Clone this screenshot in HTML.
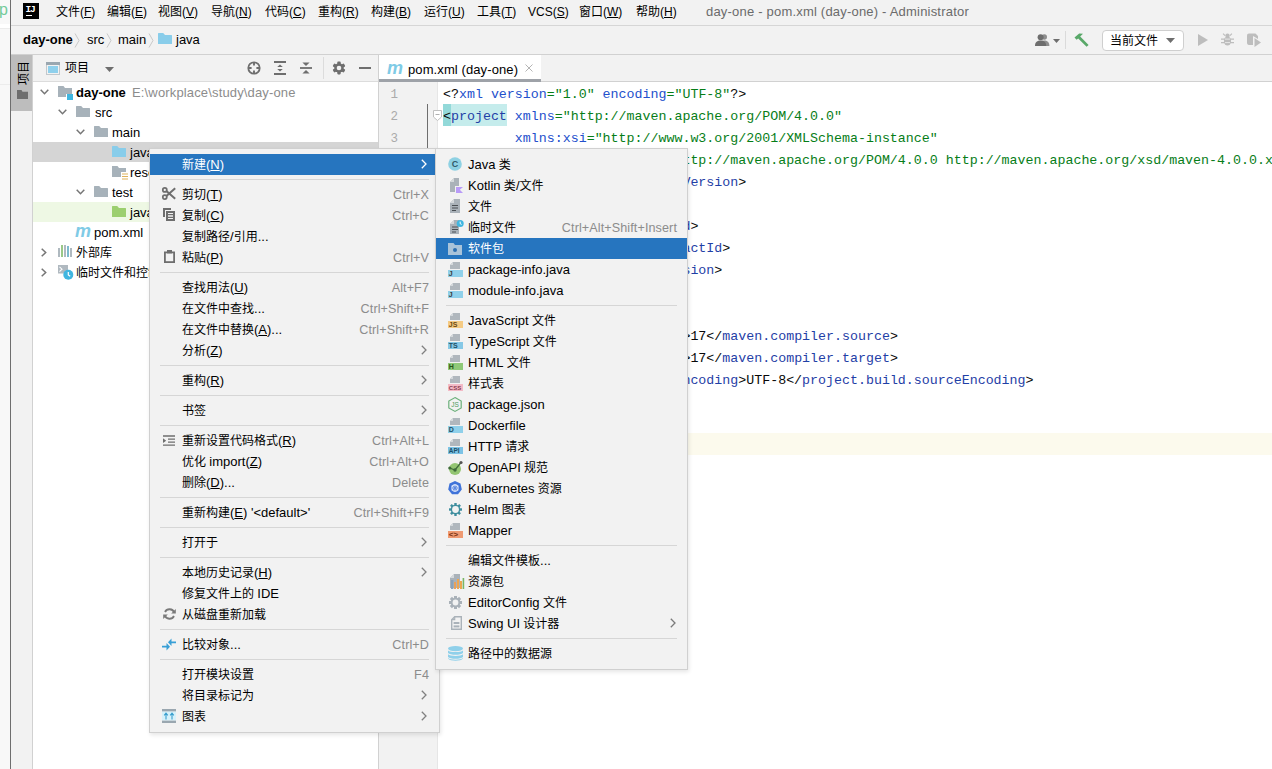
<!DOCTYPE html>
<html lang="zh-CN">
<head>
<meta charset="utf-8">
<title>day-one - pom.xml (day-one) - Administrator</title>
<style>
*{box-sizing:border-box;margin:0;padding:0}
html,body{width:1272px;height:769px;overflow:hidden;background:#fff}
body{position:relative;font-family:"Liberation Sans","Noto Sans CJK SC",sans-serif;font-size:12px;color:#000;line-height:1}
.l{font-size:13px;line-height:0}
.abs{position:absolute}
.t{position:absolute;white-space:nowrap;line-height:16px;height:16px}
u{text-decoration:underline;text-underline-offset:1px;text-decoration-thickness:1px}
#strip{left:0;top:0;width:10px;height:769px;background:#f8f8f8}
#winb{left:10px;top:0;width:1px;height:769px;background:#6e6e6e}
#title{left:11px;top:0;width:1261px;height:25px;background:#f2f2f2}
#titleb{left:11px;top:25px;width:1261px;height:1px;background:#d6d6d6}
#nav{left:11px;top:26px;width:1261px;height:28px;background:#f2f2f2}
#navb{left:11px;top:54px;width:1261px;height:1px;background:#d1d1d1}
.mi{top:4px}
#stripe{left:11px;top:55px;width:21px;height:714px;background:#f2f2f2}
#stripeb{left:32px;top:55px;width:1px;height:714px;background:#d1d1d1}
#stripesel{left:11px;top:55px;width:21px;height:56px;background:#bdbdbd}
#proj{left:33px;top:55px;width:345px;height:714px;background:#fff}
#projh{left:33px;top:55px;width:345px;height:27px;background:#f2f2f2;border-bottom:1px solid #dcdcdc}
#projb{left:378px;top:55px;width:1px;height:714px;background:#d1d1d1}
.row{position:absolute;left:33px;width:345px;height:20px}
.tt{position:absolute;white-space:nowrap;line-height:20px;height:20px;font-size:12px;margin-top:1px}
#tabs{left:379px;top:55px;width:893px;height:26px;background:#f2f2f2}
#tabsb{left:379px;top:81px;width:893px;height:1px;background:#d1d1d1}
#tab{left:379px;top:55px;width:162px;height:24px;background:#fff}
#tabu{left:379px;top:79px;width:162px;height:3px;background:#9ea2a8}
#gutter{left:379px;top:82px;width:58px;height:687px;background:#f2f2f2}
#gutterb{left:437px;top:82px;width:1px;height:687px;background:#e6e6e6}
#ed{left:438px;top:82px;width:834px;height:687px;background:#fff}
.ln{position:absolute;left:379px;width:19px;text-align:right;font-family:"Liberation Mono",monospace;font-size:12.5px;line-height:22px;height:22px;color:#ababab;margin-top:-.5px}
.cl{position:absolute;left:443px;white-space:pre;font-family:"Liberation Mono",monospace;font-size:13.3px;line-height:22px;height:22px;color:#080808}
.tg{color:#1f40a6}.at{color:#2350cc}.vl{color:#067d17}
.menu{position:absolute;background:#f2f2f2;border:1px solid #d0d0d0;box-shadow:1px 2px 4px rgba(0,0,0,.10)}
.it{position:absolute;left:0;right:0;height:21px}
.it .lb{position:absolute;top:1px;line-height:21px;white-space:nowrap}
.it .sc{position:absolute;top:1px;letter-spacing:.1px;line-height:21px;white-space:nowrap;color:#8c8c8c}
.it.sel{background:#2675bf;color:#fff}
.sc .l{font-size:12.6px}
.sep{position:absolute;height:1px;background:#d6d6d6}
svg{position:absolute;overflow:visible}
</style>
</head>
<body>
<div id="strip" class="abs"></div>
<div class="t" style="left:-1px;top:2px;font-size:16px;color:#74cb9a">p</div>
<div class="abs" style="left:0;top:24px;width:10px;height:5px;background:#fff;border-bottom:1px solid #ececec"></div><div class="abs" style="left:0;top:84px;width:10px;height:1px;background:#ececec"></div>
<div id="winb" class="abs"></div>
<div id="title" class="abs"></div><div id="titleb" class="abs"></div><div id="nav" class="abs"></div><div id="navb" class="abs"></div>
<div class="abs" style="left:23px;top:3px;width:16px;height:16px;background:#000"></div>
<div class="abs" style="left:25.6px;top:6px;font-family:'Liberation Mono',monospace;font-weight:bold;font-size:9.5px;line-height:8px;color:#fff;letter-spacing:-1.2px">IJ</div>
<div class="abs" style="left:26px;top:15px;width:6px;height:1px;background:#fff"></div>
<div class="t mi" style="left:56px">文件(<u>F</u>)</div>
<div class="t mi" style="left:107px">编辑(<u>E</u>)</div>
<div class="t mi" style="left:158px">视图(<u>V</u>)</div>
<div class="t mi" style="left:211px">导航(<u>N</u>)</div>
<div class="t mi" style="left:265px">代码(<u>C</u>)</div>
<div class="t mi" style="left:318px">重构(<u>R</u>)</div>
<div class="t mi" style="left:371px">构建(<u>B</u>)</div>
<div class="t mi" style="left:424px">运行(<u>U</u>)</div>
<div class="t mi" style="left:477px">工具(<u>T</u>)</div>
<div class="t mi" style="left:528px">VCS(<u>S</u>)</div>
<div class="t mi" style="left:579px">窗口(<u>W</u>)</div>
<div class="t mi" style="left:636px">帮助(<u>H</u>)</div>
<div class="t mi" style="left:706px;color:#6b6b6b;letter-spacing:.2px"><span class="l">day-one - pom.xml (day-one) - Administrator</span></div>
<div class="t" style="left:23px;top:32px;font-weight:bold"><span class="l">day-one</span></div>
<svg style="left:74px;top:33px" width="6" height="15" viewBox="0 0 6 15"><path d="M1 0.5 L5 7.5 L1 14.5" fill="none" stroke="#c9c9c9" stroke-width="1"/></svg>
<div class="t" style="left:87px;top:32px"><span class="l">src</span></div>
<svg style="left:106px;top:33px" width="6" height="15" viewBox="0 0 6 15"><path d="M1 0.5 L5 7.5 L1 14.5" fill="none" stroke="#c9c9c9" stroke-width="1"/></svg>
<div class="t" style="left:118px;top:32px"><span class="l">main</span></div>
<svg style="left:147.5px;top:33px" width="6" height="15" viewBox="0 0 6 15"><path d="M1 0.5 L5 7.5 L1 14.5" fill="none" stroke="#c9c9c9" stroke-width="1"/></svg>
<svg style="left:158px;top:33px" width="14" height="11" viewBox="0 0 14 11"><path d="M0 0.6Q0 0 0.6 0H5.2L7 2H13.4Q14 2 14 2.6V11H0Z" fill="#89cdea"/></svg>
<div class="t" style="left:176px;top:32px"><span class="l">java</span></div>
<svg style="left:1035px;top:34px" width="15" height="12" viewBox="0 0 15 12"><g fill="#6e6e6e"><circle cx="9.3" cy="3" r="2.7" opacity=".75"/><path d="M4.5 12C4.5 8.4 6.5 6.6 9.3 6.6S14.4 8.4 14.4 12Z" opacity=".75"/><circle cx="5.6" cy="3.2" r="3"/><path d="M0 12C0 8 2.4 6.6 5.6 6.6S11.2 8 11.2 12Z"/></g></svg>
<svg style="left:1053px;top:39px" width="7" height="4" viewBox="0 0 7 4"><path d="M0 0H7L3.5 4Z" fill="#6e6e6e"/></svg>
<div class="abs" style="left:1065px;top:31px;width:1px;height:18px;background:#dadada"></div>
<svg style="left:1074px;top:33px" width="15" height="14" viewBox="0 0 15 14"><path d="M0.5 4.6L5.2 0.4L9 0.8L6.2 3.4L14.6 12L12.6 13.8L4.2 5.4L2.6 6.8Z" fill="#59a869"/></svg>
<div class="abs" style="left:1102px;top:30px;width:82px;height:21px;background:#fff;border:1px solid #cfcfcf;border-radius:4px"></div>
<div class="t" style="left:1110px;top:33px">当前文件</div>
<svg style="left:1166px;top:38px" width="9" height="5" viewBox="0 0 9 5"><path d="M0 0H9L4.5 5Z" fill="#6e6e6e"/></svg>
<svg style="left:1198px;top:34px" width="10" height="12" viewBox="0 0 10 12"><path d="M0 0L10 6L0 12Z" fill="#bdbdbd"/></svg>
<svg style="left:1221px;top:33px" width="13" height="13" viewBox="0 0 13 13"><g fill="#bdbdbd"><ellipse cx="6.5" cy="8" rx="3.6" ry="4.6"/><circle cx="6.5" cy="2.8" r="2.2"/><path d="M0 5.5H13V6.8H0ZM0 9H13V10.3H0Z"/><path d="M2.5 0.3L4.4 2.2L3.6 3L1.7 1.1ZM10.5 0.3L8.6 2.2L9.4 3L11.3 1.1Z"/></g><path d="M4 6.1H9M4 9.6H9" stroke="#f2f2f2" stroke-width=".8"/></svg>
<svg style="left:1247px;top:33px" width="14" height="14" viewBox="0 0 14 14"><path d="M2 0.5H8.5L11 3V6L6 3V12H2C0.6 12 0 11 0 9.5V3C0 1.2 0.8 0.5 2 0.5Z" fill="#bdbdbd"/><path d="M7.5 5L14 9.5L7.5 14Z" fill="#bdbdbd"/></svg>
<div id="stripe" class="abs"></div><div id="stripesel" class="abs"></div><div id="stripeb" class="abs"></div>
<div class="abs" style="left:16px;top:60px;width:16px;height:26px"><div style="position:absolute;left:-5px;top:5px;width:26px;height:16px;line-height:16px;font-size:12px;transform:rotate(-90deg);white-space:nowrap;text-align:center">项目</div></div>
<svg style="left:17px;top:90px" width="11" height="9" viewBox="0 0 11 9"><path d="M0 0H4.5L5.5 1.8H11V9H0Z" fill="#6e6e6e"/></svg>
<div id="proj" class="abs"></div><div id="projh" class="abs"></div><div id="projb" class="abs"></div>
<svg style="left:46px;top:62px" width="14" height="13" viewBox="0 0 14 13"><rect x="0.5" y="0.5" width="13" height="12" fill="#f2f2f2" stroke="#c2c8cc"/><rect x="2" y="4" width="10" height="7" fill="#8fd0ec"/><rect x="0" y="0" width="14" height="3" fill="#9aa7b0"/></svg>
<div class="t" style="left:65px;top:60px">项目</div>
<svg style="left:105px;top:67px" width="9" height="5" viewBox="0 0 9 5"><path d="M0 0H9L4.5 5Z" fill="#6e6e6e"/></svg>
<svg style="left:247px;top:61px" width="14" height="14" viewBox="0 0 14 14"><circle cx="7" cy="7" r="5.7" fill="none" stroke="#6e6e6e" stroke-width="1.8"/><path d="M7 1V4.6M7 9.4V13M1 7H4.6M9.4 7H13" stroke="#6e6e6e" stroke-width="1.9"/></svg>
<svg style="left:274px;top:61px" width="12" height="14" viewBox="0 0 12 14"><path d="M0 1H12M0 13H12" stroke="#6e6e6e" stroke-width="2"/><path d="M6 3.4L8.8 6H3.2ZM6 10.6L8.8 8H3.2Z" fill="#6e6e6e"/></svg>
<svg style="left:300px;top:61px" width="12" height="14" viewBox="0 0 12 14"><path d="M0 7H12" stroke="#6e6e6e" stroke-width="1.8"/><path d="M6 5L9.6 1.4H2.4ZM6 9L9.6 12.6H2.4Z" fill="#6e6e6e"/></svg>
<div class="abs" style="left:323px;top:57px;width:1px;height:22px;background:#dcdcdc"></div>
<svg style="left:332px;top:61px" width="14" height="14" viewBox="0 0 14 14"><g fill="#6e6e6e"><circle cx="7" cy="7" r="4.7"/><rect x="5.3" y="0.6" width="3.4" height="12.8" rx=".8"/><rect x="5.3" y="0.6" width="3.4" height="12.8" rx=".8" transform="rotate(60 7 7)"/><rect x="5.3" y="0.6" width="3.4" height="12.8" rx=".8" transform="rotate(120 7 7)"/></g><circle cx="7" cy="7" r="2.3" fill="#f2f2f2"/></svg>
<div class="abs" style="left:359px;top:67px;width:12px;height:2px;background:#6e6e6e"></div>
<div class="row" style="top:142px;background:#d5d5d5"></div>
<div class="row" style="top:202px;background:#eef8e4"></div>
<svg style="left:40px;top:89px" width="9" height="6" viewBox="0 0 9 6"><path d="M0.7 0.7 L4.5 4.7 L8.3 0.7" fill="none" stroke="#767676" stroke-width="1.5"/></svg>
<svg style="left:58px;top:86px" width="16" height="14" viewBox="0 0 16 14"><path d="M0 0H5.5L7 2H14V8H8V11H0Z" fill="#a7b2ba"/><rect x="9" y="8" width="6" height="6" fill="#40b6e0"/></svg>
<div class="tt" style="left:76px;top:82px;font-weight:bold"><span class="l">day-one</span></div>
<div class="tt" style="left:132px;top:82px;color:#8c8c8c;letter-spacing:.15px"><span class="l">E:\workplace\study\day-one</span></div>
<svg style="left:58px;top:109px" width="9" height="6" viewBox="0 0 9 6"><path d="M0.7 0.7 L4.5 4.7 L8.3 0.7" fill="none" stroke="#767676" stroke-width="1.5"/></svg>
<svg style="left:76px;top:106px" width="14" height="11" viewBox="0 0 14 11"><path d="M0 0.6Q0 0 0.6 0H5.2L7 2H13.4Q14 2 14 2.6V11H0Z" fill="#a7b2ba"/></svg>
<div class="tt" style="left:95px;top:102px;"><span class="l">src</span></div>
<svg style="left:76px;top:129px" width="9" height="6" viewBox="0 0 9 6"><path d="M0.7 0.7 L4.5 4.7 L8.3 0.7" fill="none" stroke="#767676" stroke-width="1.5"/></svg>
<svg style="left:94px;top:126px" width="14" height="11" viewBox="0 0 14 11"><path d="M0 0.6Q0 0 0.6 0H5.2L7 2H13.4Q14 2 14 2.6V11H0Z" fill="#a7b2ba"/></svg>
<div class="tt" style="left:112px;top:122px;"><span class="l">main</span></div>
<svg style="left:112px;top:146px" width="14" height="11" viewBox="0 0 14 11"><path d="M0 0.6Q0 0 0.6 0H5.2L7 2H13.4Q14 2 14 2.6V11H0Z" fill="#89cdea"/></svg>
<div class="tt" style="left:130px;top:142px;"><span class="l">java</span></div>
<svg style="left:112px;top:166px" width="16" height="14" viewBox="0 0 16 14"><path d="M0 0H5.5L7 2H14V6H9V11H0Z" fill="#a7b2ba"/><path d="M10 8H16M10 10.5H16M10 13H16" stroke="#e0b35a" stroke-width="1.2"/></svg>
<div class="tt" style="left:130px;top:162px;"><span class="l">resources</span></div>
<svg style="left:76px;top:189px" width="9" height="6" viewBox="0 0 9 6"><path d="M0.7 0.7 L4.5 4.7 L8.3 0.7" fill="none" stroke="#767676" stroke-width="1.5"/></svg>
<svg style="left:94px;top:186px" width="14" height="11" viewBox="0 0 14 11"><path d="M0 0.6Q0 0 0.6 0H5.2L7 2H13.4Q14 2 14 2.6V11H0Z" fill="#a7b2ba"/></svg>
<div class="tt" style="left:112px;top:182px;"><span class="l">test</span></div>
<svg style="left:112px;top:206px" width="14" height="11" viewBox="0 0 14 11"><path d="M0 0.6Q0 0 0.6 0H5.2L7 2H13.4Q14 2 14 2.6V11H0Z" fill="#9ccf6f"/></svg>
<div class="tt" style="left:130px;top:202px;"><span class="l">java</span></div>
<div class="abs" style="left:75px;top:222px;width:17px;height:20px;line-height:19px;font-family:'Liberation Sans',sans-serif;font-style:italic;font-weight:bold;font-size:18px;color:#7fcbe6">m</div>
<div class="tt" style="left:94px;top:222px;"><span class="l">pom.xml</span></div>
<svg style="left:41px;top:248px" width="6" height="9" viewBox="0 0 6 9"><path d="M0.7 0.7 L4.7 4.5 L0.7 8.3" fill="none" stroke="#767676" stroke-width="1.5"/></svg>
<svg style="left:58px;top:245px" width="14" height="12" viewBox="0 0 14 12"><path d="M1 3V12M7 0V12M13 3V12" stroke="#a7b2ba" stroke-width="1.8"/><path d="M4 0V12" stroke="#8fc27a" stroke-width="1.8"/><path d="M10 1V12" stroke="#6fb3c9" stroke-width="1.8"/></svg>
<div class="tt" style="left:76px;top:242px;">外部库</div>
<svg style="left:41px;top:268px" width="6" height="9" viewBox="0 0 6 9"><path d="M0.7 0.7 L4.7 4.5 L0.7 8.3" fill="none" stroke="#767676" stroke-width="1.5"/></svg>
<svg style="left:57px;top:265px" width="17" height="15" viewBox="0 0 17 15"><rect x="1" y="0" width="10" height="8.5" fill="#b0b9c0"/><path d="M2.5 1.8L5 4.2L2.5 6.6" stroke="#fff" fill="none" stroke-width="1.1"/><circle cx="11.3" cy="9.8" r="5" fill="#40b6e0"/><path d="M11.3 7V10L13.2 11.2" stroke="#fff" fill="none" stroke-width="1.2"/></svg>
<div class="tt" style="left:76px;top:262px;">临时文件和控制台</div>
<div id="tabs" class="abs"></div><div id="tabsb" class="abs"></div><div id="tab" class="abs"></div><div id="tabu" class="abs"></div><div id="gutter" class="abs"></div><div id="gutterb" class="abs"></div><div id="ed" class="abs"></div>
<div class="abs" style="left:387px;top:59px;width:18px;height:20px;line-height:19px;font-family:'Liberation Sans',sans-serif;font-style:italic;font-weight:bold;font-size:18px;color:#7fcbe6">m</div>
<div class="t" style="left:408px;top:62px"><span class="l" style="letter-spacing:.1px">pom.xml (day-one)</span></div>
<svg style="left:525px;top:64px" width="8" height="8" viewBox="0 0 8 8"><path d="M0.5 0.5L7.5 7.5M7.5 0.5L0.5 7.5" stroke="#b4b4b4" stroke-width="1"/></svg>
<div class="abs" style="left:438px;top:433px;width:834px;height:22px;background:#fcfaed"></div>
<div class="abs" style="left:443px;top:104px;width:8px;height:22px;background:#93d9d9"></div>
<div class="abs" style="left:451px;top:104px;width:56px;height:22px;background:#c5ecec"></div>
<div class="abs" style="left:427px;top:104px;width:1px;height:360px;background:#6e6e6e"></div>
<svg style="left:433px;top:110px" width="9" height="11" viewBox="0 0 9 11"><path d="M0.5 0.5H8.5V7L4.5 10.5L0.5 7Z" fill="#fff" stroke="#c0c0c0"/><path d="M2.5 4.5H6.5" stroke="#b0b0b0"/></svg>
<div class="ln" style="top:84px">1</div>
<div class="cl" style="top:84px">&lt;?<span class="at">xml version</span><span class="vl">="1.0"</span><span class="at"> encoding</span><span class="vl">="UTF-8"</span>?&gt;</div>
<div class="ln" style="top:106px">2</div>
<div class="cl" style="top:106px">&lt;<span class="tg">project</span><span class="at"> xmlns</span><span class="vl">="http://maven.apache.org/POM/4.0.0"</span></div>
<div class="ln" style="top:128px">3</div>
<div class="cl" style="top:128px">         <span class="at">xmlns:xsi</span><span class="vl">="http://www.w3.org/2001/XMLSchema-instance"</span></div>
<div class="ln" style="top:150px">4</div>
<div class="cl" style="top:150px">         <span class="at">xsi:schemaLocation</span><span class="vl">="http://maven.apache.org/POM/4.0.0 http://maven.apache.org/xsd/maven-4.0.0.xsd"</span>&gt;</div>
<div class="ln" style="top:172px">5</div>
<div class="cl" style="top:172px">    &lt;<span class="tg">modelVersion</span>&gt;4.0.0&lt;/<span class="tg">modelVersion</span>&gt;</div>
<div class="ln" style="top:194px">6</div>
<div class="ln" style="top:216px">7</div>
<div class="cl" style="top:216px">    &lt;<span class="tg">groupId</span>&gt;com.study&lt;/<span class="tg">groupId</span>&gt;</div>
<div class="ln" style="top:238px">8</div>
<div class="cl" style="top:238px">    &lt;<span class="tg">artifactId</span>&gt;day-one&lt;/<span class="tg">artifactId</span>&gt;</div>
<div class="ln" style="top:260px">9</div>
<div class="cl" style="top:260px">    &lt;<span class="tg">version</span>&gt;1.0-SNAPSHOT&lt;/<span class="tg">version</span>&gt;</div>
<div class="ln" style="top:282px">10</div>
<div class="ln" style="top:304px">11</div>
<div class="cl" style="top:304px">    &lt;<span class="tg">properties</span>&gt;</div>
<div class="ln" style="top:326px">12</div>
<div class="cl" style="top:326px">        &lt;<span class="tg">maven.compiler.source</span>&gt;17&lt;/<span class="tg">maven.compiler.source</span>&gt;</div>
<div class="ln" style="top:348px">13</div>
<div class="cl" style="top:348px">        &lt;<span class="tg">maven.compiler.target</span>&gt;17&lt;/<span class="tg">maven.compiler.target</span>&gt;</div>
<div class="ln" style="top:370px">14</div>
<div class="cl" style="top:370px">        &lt;<span class="tg">project.build.sourceEncoding</span>&gt;UTF-8&lt;/<span class="tg">project.build.sourceEncoding</span>&gt;</div>
<div class="ln" style="top:392px">15</div>
<div class="cl" style="top:392px">    &lt;/<span class="tg">properties</span>&gt;</div>
<div class="ln" style="top:414px">16</div>
<div class="ln" style="top:436px">17</div>
<div class="ln" style="top:458px">18</div>
<div class="cl" style="top:458px">&lt;/<span class="tg">project</span>&gt;</div>
<div class="menu" style="left:149px;top:148px;width:291px;height:585px"><div class="it sel" style="top:5px"><span class="lb" style="left:32px">新建<span class="l">(</span><u><span class="l">N</span></u><span class="l">)</span></span></div><svg style="left:271px;top:10px" width="6" height="10" viewBox="0 0 6 10"><path d="M0.8 0.8L5 5L0.8 9.2" fill="none" stroke="#fff" stroke-width="1.3"/></svg><div class="sep" style="left:10px;top:30px;width:269px"></div><div class="it " style="top:35px"><span class="lb" style="left:32px">剪切<span class="l">(</span><u><span class="l">T</span></u><span class="l">)</span></span><span class="sc" style="right:10px"><span class="l">Ctrl+X</span></span></div><div class="it " style="top:56px"><span class="lb" style="left:32px">复制<span class="l">(</span><u><span class="l">C</span></u><span class="l">)</span></span><span class="sc" style="right:10px"><span class="l">Ctrl+C</span></span></div><div class="it " style="top:77px"><span class="lb" style="left:32px">复制路径<span class="l">/</span>引用<span class="l">...</span></span></div><div class="it " style="top:98px"><span class="lb" style="left:32px">粘贴<span class="l">(</span><u><span class="l">P</span></u><span class="l">)</span></span><span class="sc" style="right:10px"><span class="l">Ctrl+V</span></span></div><div class="sep" style="left:10px;top:123px;width:269px"></div><div class="it " style="top:128px"><span class="lb" style="left:32px">查找用法<span class="l">(</span><u><span class="l">U</span></u><span class="l">)</span></span><span class="sc" style="right:10px"><span class="l">Alt+F7</span></span></div><div class="it " style="top:149px"><span class="lb" style="left:32px">在文件中查找<span class="l">...</span></span><span class="sc" style="right:10px"><span class="l">Ctrl+Shift+F</span></span></div><div class="it " style="top:170px"><span class="lb" style="left:32px">在文件中替换<span class="l">(</span><u><span class="l">A</span></u><span class="l">)...</span></span><span class="sc" style="right:10px"><span class="l">Ctrl+Shift+R</span></span></div><div class="it " style="top:191px"><span class="lb" style="left:32px">分析<span class="l">(</span><u><span class="l">Z</span></u><span class="l">)</span></span></div><svg style="left:271px;top:196px" width="6" height="10" viewBox="0 0 6 10"><path d="M0.8 0.8L5 5L0.8 9.2" fill="none" stroke="#808080" stroke-width="1.3"/></svg><div class="sep" style="left:10px;top:216px;width:269px"></div><div class="it " style="top:221px"><span class="lb" style="left:32px">重构<span class="l">(</span><u><span class="l">R</span></u><span class="l">)</span></span></div><svg style="left:271px;top:226px" width="6" height="10" viewBox="0 0 6 10"><path d="M0.8 0.8L5 5L0.8 9.2" fill="none" stroke="#808080" stroke-width="1.3"/></svg><div class="sep" style="left:10px;top:246px;width:269px"></div><div class="it " style="top:251px"><span class="lb" style="left:32px">书签</span></div><svg style="left:271px;top:256px" width="6" height="10" viewBox="0 0 6 10"><path d="M0.8 0.8L5 5L0.8 9.2" fill="none" stroke="#808080" stroke-width="1.3"/></svg><div class="sep" style="left:10px;top:276px;width:269px"></div><div class="it " style="top:281px"><span class="lb" style="left:32px">重新设置代码格式<span class="l">(</span><u><span class="l">R</span></u><span class="l">)</span></span><span class="sc" style="right:10px"><span class="l">Ctrl+Alt+L</span></span></div><div class="it " style="top:302px"><span class="lb" style="left:32px">优化 <span class="l">import(</span><u><span class="l">Z</span></u><span class="l">)</span></span><span class="sc" style="right:10px"><span class="l">Ctrl+Alt+O</span></span></div><div class="it " style="top:323px"><span class="lb" style="left:32px">删除<span class="l">(</span><u><span class="l">D</span></u><span class="l">)...</span></span><span class="sc" style="right:10px"><span class="l">Delete</span></span></div><div class="sep" style="left:10px;top:348px;width:269px"></div><div class="it " style="top:353px"><span class="lb" style="left:32px">重新构建<span class="l">(</span><u><span class="l">E</span></u><span class="l">) '&lt;default&gt;'</span></span><span class="sc" style="right:10px"><span class="l">Ctrl+Shift+F9</span></span></div><div class="sep" style="left:10px;top:378px;width:269px"></div><div class="it " style="top:383px"><span class="lb" style="left:32px">打开于</span></div><svg style="left:271px;top:388px" width="6" height="10" viewBox="0 0 6 10"><path d="M0.8 0.8L5 5L0.8 9.2" fill="none" stroke="#808080" stroke-width="1.3"/></svg><div class="sep" style="left:10px;top:408px;width:269px"></div><div class="it " style="top:413px"><span class="lb" style="left:32px">本地历史记录<span class="l">(</span><u><span class="l">H</span></u><span class="l">)</span></span></div><svg style="left:271px;top:418px" width="6" height="10" viewBox="0 0 6 10"><path d="M0.8 0.8L5 5L0.8 9.2" fill="none" stroke="#808080" stroke-width="1.3"/></svg><div class="it " style="top:434px"><span class="lb" style="left:32px">修复文件上的 <span class="l">IDE</span></span></div><div class="it " style="top:455px"><span class="lb" style="left:32px">从磁盘重新加载</span></div><div class="sep" style="left:10px;top:480px;width:269px"></div><div class="it " style="top:485px"><span class="lb" style="left:32px">比较对象<span class="l">...</span></span><span class="sc" style="right:10px"><span class="l">Ctrl+D</span></span></div><div class="sep" style="left:10px;top:510px;width:269px"></div><div class="it " style="top:515px"><span class="lb" style="left:32px">打开模块设置</span><span class="sc" style="right:10px"><span class="l">F4</span></span></div><div class="it " style="top:536px"><span class="lb" style="left:32px">将目录标记为</span></div><svg style="left:271px;top:541px" width="6" height="10" viewBox="0 0 6 10"><path d="M0.8 0.8L5 5L0.8 9.2" fill="none" stroke="#808080" stroke-width="1.3"/></svg><div class="it " style="top:557px"><span class="lb" style="left:32px">图表</span></div><svg style="left:271px;top:562px" width="6" height="10" viewBox="0 0 6 10"><path d="M0.8 0.8L5 5L0.8 9.2" fill="none" stroke="#808080" stroke-width="1.3"/></svg><svg style="left:12px;top:38px" width="14" height="13" viewBox="0 0 14 13"><circle cx="2.8" cy="2.9" r="2" fill="none" stroke="#6e6e6e" stroke-width="1.7"/><circle cx="2.8" cy="10.1" r="2" fill="none" stroke="#6e6e6e" stroke-width="1.7"/><path d="M4.4 4L13.2 11.8M4.4 9L13.2 1.2" stroke="#6e6e6e" stroke-width="2" fill="none"/></svg><svg style="left:13px;top:59px" width="12" height="13" viewBox="0 0 12 13"><path d="M1 9V1H8" fill="none" stroke="#6e6e6e" stroke-width="2"/><rect x="4" y="4" width="7" height="8" fill="none" stroke="#6e6e6e" stroke-width="2"/><path d="M5 6.7H10M5 9.4H10" stroke="#6e6e6e" stroke-width="1.3"/></svg><svg style="left:14px;top:101px" width="11" height="13" viewBox="0 0 11 13"><rect x="0.9" y="2.4" width="9.2" height="9.7" fill="none" stroke="#6e6e6e" stroke-width="1.8"/><rect x="3" y="0" width="5" height="3.4" fill="#6e6e6e"/></svg><svg style="left:13px;top:286px" width="12" height="11" viewBox="0 0 12 11"><path d="M0 1H12M5 4.2H12M5 7.2H12M0 10.2H12" stroke="#6e6e6e" stroke-width="1.3"/><path d="M0 3.3L3.2 5.7L0 8.1Z" fill="#6e6e6e"/></svg><svg style="left:13px;top:459px" width="13" height="12" viewBox="0 0 13 12"><path d="M11.2 4.6A5 5 0 0 0 2 4" fill="none" stroke="#7a7a7a" stroke-width="1.8"/><path d="M1.8 7.4A5 5 0 0 0 11 8" fill="none" stroke="#7a7a7a" stroke-width="1.8"/><path d="M12.8 1V5.6H8.2Z" fill="#7a7a7a"/><path d="M0.2 11V6.4H4.8Z" fill="#7a7a7a"/></svg><svg style="left:12px;top:489px" width="14" height="13" viewBox="0 0 14 13"><path d="M0 8.7H5.5M8.5 4.3H14" stroke="#389fd6" stroke-width="1.7"/><path d="M4.5 5L8 8.7L4.5 12.4Z" fill="#389fd6"/><path d="M9.5 0.6L6 4.3L9.5 8Z" fill="#389fd6"/></svg><svg style="left:12px;top:560px" width="14" height="14" viewBox="0 0 14 14"><rect x="0" y="0" width="14" height="2.6" fill="#9aa7b0"/><rect x="0" y="11.4" width="14" height="2.6" fill="#9aa7b0"/><rect x="0" y="2.6" width="14" height="8.8" fill="#d6f1fa"/><path d="M4 4.5V10.5M10 4.5V10.5" stroke="#3a9fce" stroke-width="1.1"/><path d="M2.2 6.4L4 4.2L5.8 6.4M8.2 6.4L10 4.2L11.8 6.4" fill="none" stroke="#3a9fce" stroke-width="1.1"/></svg></div>
<div class="menu" style="left:435px;top:148px;width:253px;height:522px"><div class="it " style="top:5px"><span class="lb" style="left:32px"><span class="l">Java</span> 类</span></div><div class="it " style="top:26px"><span class="lb" style="left:32px"><span class="l">Kotlin</span> 类<span class="l">/</span>文件</span></div><div class="it " style="top:47px"><span class="lb" style="left:32px">文件</span></div><div class="it " style="top:68px"><span class="lb" style="left:32px">临时文件</span><span class="sc" style="right:10px"><span class="l">Ctrl+Alt+Shift+Insert</span></span></div><div class="it sel" style="top:89px"><span class="lb" style="left:32px">软件包</span></div><div class="it " style="top:110px"><span class="lb" style="left:32px"><span class="l">package-info.java</span></span></div><div class="it " style="top:131px"><span class="lb" style="left:32px"><span class="l">module-info.java</span></span></div><div class="sep" style="left:10px;top:156px;width:231px"></div><div class="it " style="top:161px"><span class="lb" style="left:32px"><span class="l">JavaScript</span> 文件</span></div><div class="it " style="top:182px"><span class="lb" style="left:32px"><span class="l">TypeScript</span> 文件</span></div><div class="it " style="top:203px"><span class="lb" style="left:32px"><span class="l">HTML</span> 文件</span></div><div class="it " style="top:224px"><span class="lb" style="left:32px">样式表</span></div><div class="it " style="top:245px"><span class="lb" style="left:32px"><span class="l">package.json</span></span></div><div class="it " style="top:266px"><span class="lb" style="left:32px"><span class="l">Dockerfile</span></span></div><div class="it " style="top:287px"><span class="lb" style="left:32px"><span class="l">HTTP</span> 请求</span></div><div class="it " style="top:308px"><span class="lb" style="left:32px"><span class="l">OpenAPI</span> 规范</span></div><div class="it " style="top:329px"><span class="lb" style="left:32px"><span class="l">Kubernetes</span> 资源</span></div><div class="it " style="top:350px"><span class="lb" style="left:32px"><span class="l">Helm</span> 图表</span></div><div class="it " style="top:371px"><span class="lb" style="left:32px"><span class="l">Mapper</span></span></div><div class="sep" style="left:10px;top:396px;width:231px"></div><div class="it " style="top:401px"><span class="lb" style="left:32px">编辑文件模板<span class="l">...</span></span></div><div class="it " style="top:422px"><span class="lb" style="left:32px">资源包</span></div><div class="it " style="top:443px"><span class="lb" style="left:32px"><span class="l">EditorConfig</span> 文件</span></div><div class="it " style="top:464px"><span class="lb" style="left:32px"><span class="l">Swing UI</span> 设计器</span></div><svg style="left:234px;top:469px" width="6" height="10" viewBox="0 0 6 10"><path d="M0.8 0.8L5 5L0.8 9.2" fill="none" stroke="#7a7a7a" stroke-width="1.3"/></svg><div class="sep" style="left:10px;top:489px;width:231px"></div><div class="it " style="top:494px"><span class="lb" style="left:32px">路径中的数据源</span></div><svg style="left:12px;top:8px" width="14" height="14" viewBox="0 0 14 14"><circle cx="7" cy="7" r="6.8" fill="#8ed1e3"/><text x="7" y="10.2" text-anchor="middle" font-family="Liberation Sans,sans-serif" font-weight="bold" font-size="9" fill="#2f5a68">C</text></svg><svg style="left:14px;top:29px" width="13" height="15" viewBox="0 0 13 15"><path d="M4 0H9V8H5V14H0V4Z" fill="#aab2b9"/><path d="M0 4L4 0V4Z" fill="#d5d9dc"/><path d="M6 9H13L9.8 11.8L13 15H6Z" fill="#b99bf8"/></svg><svg style="left:14px;top:50px" width="10" height="14" viewBox="0 0 10 14"><path d="M4 0H10V14H0V4Z" fill="#aab2b9"/><path d="M0 4L4 0V4Z" fill="#d5d9dc"/><path d="M2 6.5H8M2 9H8M2 11.5H6" stroke="#4a4f54" stroke-width="1.1"/></svg><svg style="left:14px;top:70px" width="15" height="15" viewBox="0 0 15 15"><path d="M4 1H9V15H0V5Z" fill="#aab2b9"/><path d="M0 5L4 1V5Z" fill="#d5d9dc"/><path d="M2 8H8M2 10.5H8M2 13H6" stroke="#4a4f54" stroke-width="1.1"/><circle cx="10.2" cy="4.4" r="3.5" fill="#40b6e0"/><path d="M10.2 2.6V4.7L11.6 5.4" stroke="#fff" fill="none" stroke-width="1"/></svg><svg style="left:12px;top:94px" width="14" height="12" viewBox="0 0 14 12"><path d="M0 0H5.5L7 2H14V12H0Z" fill="#a9c3d9"/><circle cx="7" cy="7" r="2" fill="#2d6fb0"/></svg><svg style="left:12px;top:113px" width="15" height="15" viewBox="0 0 15 15"><path d="M5 0H12V7H2V3Z" fill="#b0b7bd"/><path d="M2 3L5 0V3Z" fill="#d5d9dc"/><rect x="0" y="8" width="15" height="7" fill="#8fd0ea"/><text x="0.8" y="14.2" font-family="Liberation Sans,sans-serif" font-weight="bold" font-size="7" fill="#3b3b3b">J</text></svg><svg style="left:12px;top:134px" width="15" height="15" viewBox="0 0 15 15"><path d="M5 0H12V7H2V3Z" fill="#b0b7bd"/><path d="M2 3L5 0V3Z" fill="#d5d9dc"/><rect x="0" y="8" width="15" height="7" fill="#8fd0ea"/><text x="0.8" y="14.2" font-family="Liberation Sans,sans-serif" font-weight="bold" font-size="7" fill="#3b3b3b">J</text></svg><svg style="left:12px;top:164px" width="15" height="15" viewBox="0 0 15 15"><path d="M5 0H12V7H2V3Z" fill="#b0b7bd"/><path d="M2 3L5 0V3Z" fill="#d5d9dc"/><rect x="0" y="8" width="15" height="7" fill="#f5cb84"/><text x="0.8" y="14.2" font-family="Liberation Sans,sans-serif" font-weight="bold" font-size="7" fill="#6b4a12">JS</text></svg><svg style="left:12px;top:185px" width="15" height="15" viewBox="0 0 15 15"><path d="M5 0H12V7H2V3Z" fill="#b0b7bd"/><path d="M2 3L5 0V3Z" fill="#d5d9dc"/><rect x="0" y="8" width="15" height="7" fill="#86c8e6"/><text x="0.8" y="14.2" font-family="Liberation Sans,sans-serif" font-weight="bold" font-size="7" fill="#1d4f66">TS</text></svg><svg style="left:12px;top:206px" width="15" height="15" viewBox="0 0 15 15"><path d="M5 0H12V7H2V3Z" fill="#b0b7bd"/><path d="M2 3L5 0V3Z" fill="#d5d9dc"/><rect x="0" y="8" width="15" height="7" fill="#8fc978"/><text x="0.8" y="14.2" font-family="Liberation Sans,sans-serif" font-weight="bold" font-size="7" fill="#27521a">H</text></svg><svg style="left:12px;top:227px" width="15" height="15" viewBox="0 0 15 15"><path d="M5 0H12V7H2V3Z" fill="#b0b7bd"/><path d="M2 3L5 0V3Z" fill="#d5d9dc"/><rect x="0" y="8" width="15" height="7" fill="#f3bac6"/><text x="0.8" y="14.2" font-family="Liberation Sans,sans-serif" font-weight="bold" font-size="6" fill="#8a3a4e">CSS</text></svg><svg style="left:12px;top:248px" width="14" height="15" viewBox="0 0 14 15"><path d="M7 0.6L13.2 4.1V10.9L7 14.4L0.8 10.9V4.1Z" fill="none" stroke="#6bb07a" stroke-width="1.2"/><text x="7" y="10" text-anchor="middle" font-family="Liberation Sans,sans-serif" font-size="6.5" fill="#4f9960">JS</text></svg><svg style="left:12px;top:269px" width="15" height="15" viewBox="0 0 15 15"><path d="M5 0H12V7H2V3Z" fill="#b0b7bd"/><path d="M2 3L5 0V3Z" fill="#d5d9dc"/><rect x="0" y="8" width="15" height="7" fill="#8fd0ea"/><text x="0.8" y="14.2" font-family="Liberation Sans,sans-serif" font-weight="bold" font-size="7" fill="#1d4f66">D</text></svg><svg style="left:12px;top:290px" width="15" height="15" viewBox="0 0 15 15"><path d="M5 0H12V7H2V3Z" fill="#b0b7bd"/><path d="M2 3L5 0V3Z" fill="#d5d9dc"/><rect x="0" y="8" width="15" height="7" fill="#7cc3e6"/><text x="0.8" y="14.2" font-family="Liberation Sans,sans-serif" font-weight="bold" font-size="6.4" fill="#1d4f66">API</text></svg><svg style="left:12px;top:311px" width="15" height="15" viewBox="0 0 15 15"><circle cx="7" cy="9" r="6" fill="#93c572"/><path d="M1.5 8L7 10L13 2.5" fill="none" stroke="#3f6b3a" stroke-width="1.3"/><circle cx="1.8" cy="8" r="1.6" fill="#3f6b3a"/><circle cx="7" cy="10" r="1.7" fill="#3f6b3a"/><circle cx="13" cy="2.5" r="1.6" fill="#555"/></svg><svg style="left:12px;top:332px" width="14" height="14" viewBox="0 0 14 14"><path d="M7 0L12.5 2.6L13.8 8.5L10 13.3H4L0.2 8.5L1.5 2.6Z" fill="#3f73d9"/><circle cx="7" cy="7" r="3.1" fill="none" stroke="#dfe8fb" stroke-width="1.1"/><path d="M7 3V11M3.5 5L10.5 9M10.5 5L3.5 9" stroke="#dfe8fb" stroke-width=".8"/><circle cx="7" cy="7" r="1" fill="#3f73d9"/></svg><svg style="left:13px;top:354px" width="13" height="13" viewBox="0 0 13 13"><g fill="#3e8e9e"><rect x="5.3" y="0" width="2.4" height="13.0" transform="rotate(0 6.5 6.5)"/><rect x="5.3" y="0" width="2.4" height="13.0" transform="rotate(45 6.5 6.5)"/><rect x="5.3" y="0" width="2.4" height="13.0" transform="rotate(90 6.5 6.5)"/><rect x="5.3" y="0" width="2.4" height="13.0" transform="rotate(135 6.5 6.5)"/><circle cx="6.5" cy="6.5" r="4.8"/></g><circle cx="6.5" cy="6.5" r="3.4" fill="#f2f2f2"/></svg><svg style="left:12px;top:374px" width="15" height="15" viewBox="0 0 15 15"><path d="M5 0H12V7H2V3Z" fill="#b0b7bd"/><path d="M2 3L5 0V3Z" fill="#d5d9dc"/><rect x="0" y="8" width="15" height="7" fill="#ef9a72"/><text x="0.8" y="14.2" font-family="Liberation Sans,sans-serif" font-weight="bold" font-size="8" fill="#7a3210">&lt;&gt;</text></svg><svg style="left:14px;top:425px" width="14" height="15" viewBox="0 0 14 15"><path d="M4 0H10V14H0V4Z" fill="#aab2b9"/><path d="M0 4L4 0V4Z" fill="#d5d9dc"/><rect x="4" y="8" width="2" height="7" fill="#e8a15a"/><rect x="7" y="5" width="2" height="10" fill="#eda64f"/><rect x="10" y="7" width="2" height="8" fill="#eda64f"/><rect x="12.6" y="4" width="1.6" height="11" fill="#79b665"/><rect x="1" y="6" width="2.4" height="9" fill="#8aa2b8"/></svg><svg style="left:13px;top:447px" width="13" height="13" viewBox="0 0 13 13"><g fill="#a9b1b8"><rect x="5.0" y="0" width="3" height="13.0" transform="rotate(0 6.5 6.5)"/><rect x="5.0" y="0" width="3" height="13.0" transform="rotate(45 6.5 6.5)"/><rect x="5.0" y="0" width="3" height="13.0" transform="rotate(90 6.5 6.5)"/><rect x="5.0" y="0" width="3" height="13.0" transform="rotate(135 6.5 6.5)"/><circle cx="6.5" cy="6.5" r="4.8"/></g><circle cx="6.5" cy="6.5" r="2.9" fill="#f2f2f2"/></svg><svg style="left:15px;top:467px" width="11" height="14" viewBox="0 0 11 14"><path d="M3.7 0.7H10.3V13.3H0.7V3.7Z" fill="none" stroke="#aab2b9" stroke-width="1.4"/><path d="M0.7 3.7H3.7V0.7" fill="none" stroke="#aab2b9" stroke-width="1.2"/><rect x="2.6" y="6" width="5.8" height="2" fill="#aab2b9"/><rect x="2.6" y="9.4" width="5.8" height="2" fill="#aab2b9"/></svg><svg style="left:12px;top:497px" width="15" height="15" viewBox="0 0 15 15"><g fill="#8fd0ea"><ellipse cx="7.5" cy="2.6" rx="7.5" ry="2.6"/><path d="M0 4.4C2 6.6 13 6.6 15 4.4V7C13 9.4 2 9.4 0 7Z"/><path d="M0 8.3C2 10.5 13 10.5 15 8.3V10.9C13 13.3 2 13.3 0 10.9Z"/><path d="M0 12.1C2 14.2 13 14.2 15 12.1V12.6C13 15.6 2 15.6 0 12.6Z"/></g></svg></div>
</body>
</html>
